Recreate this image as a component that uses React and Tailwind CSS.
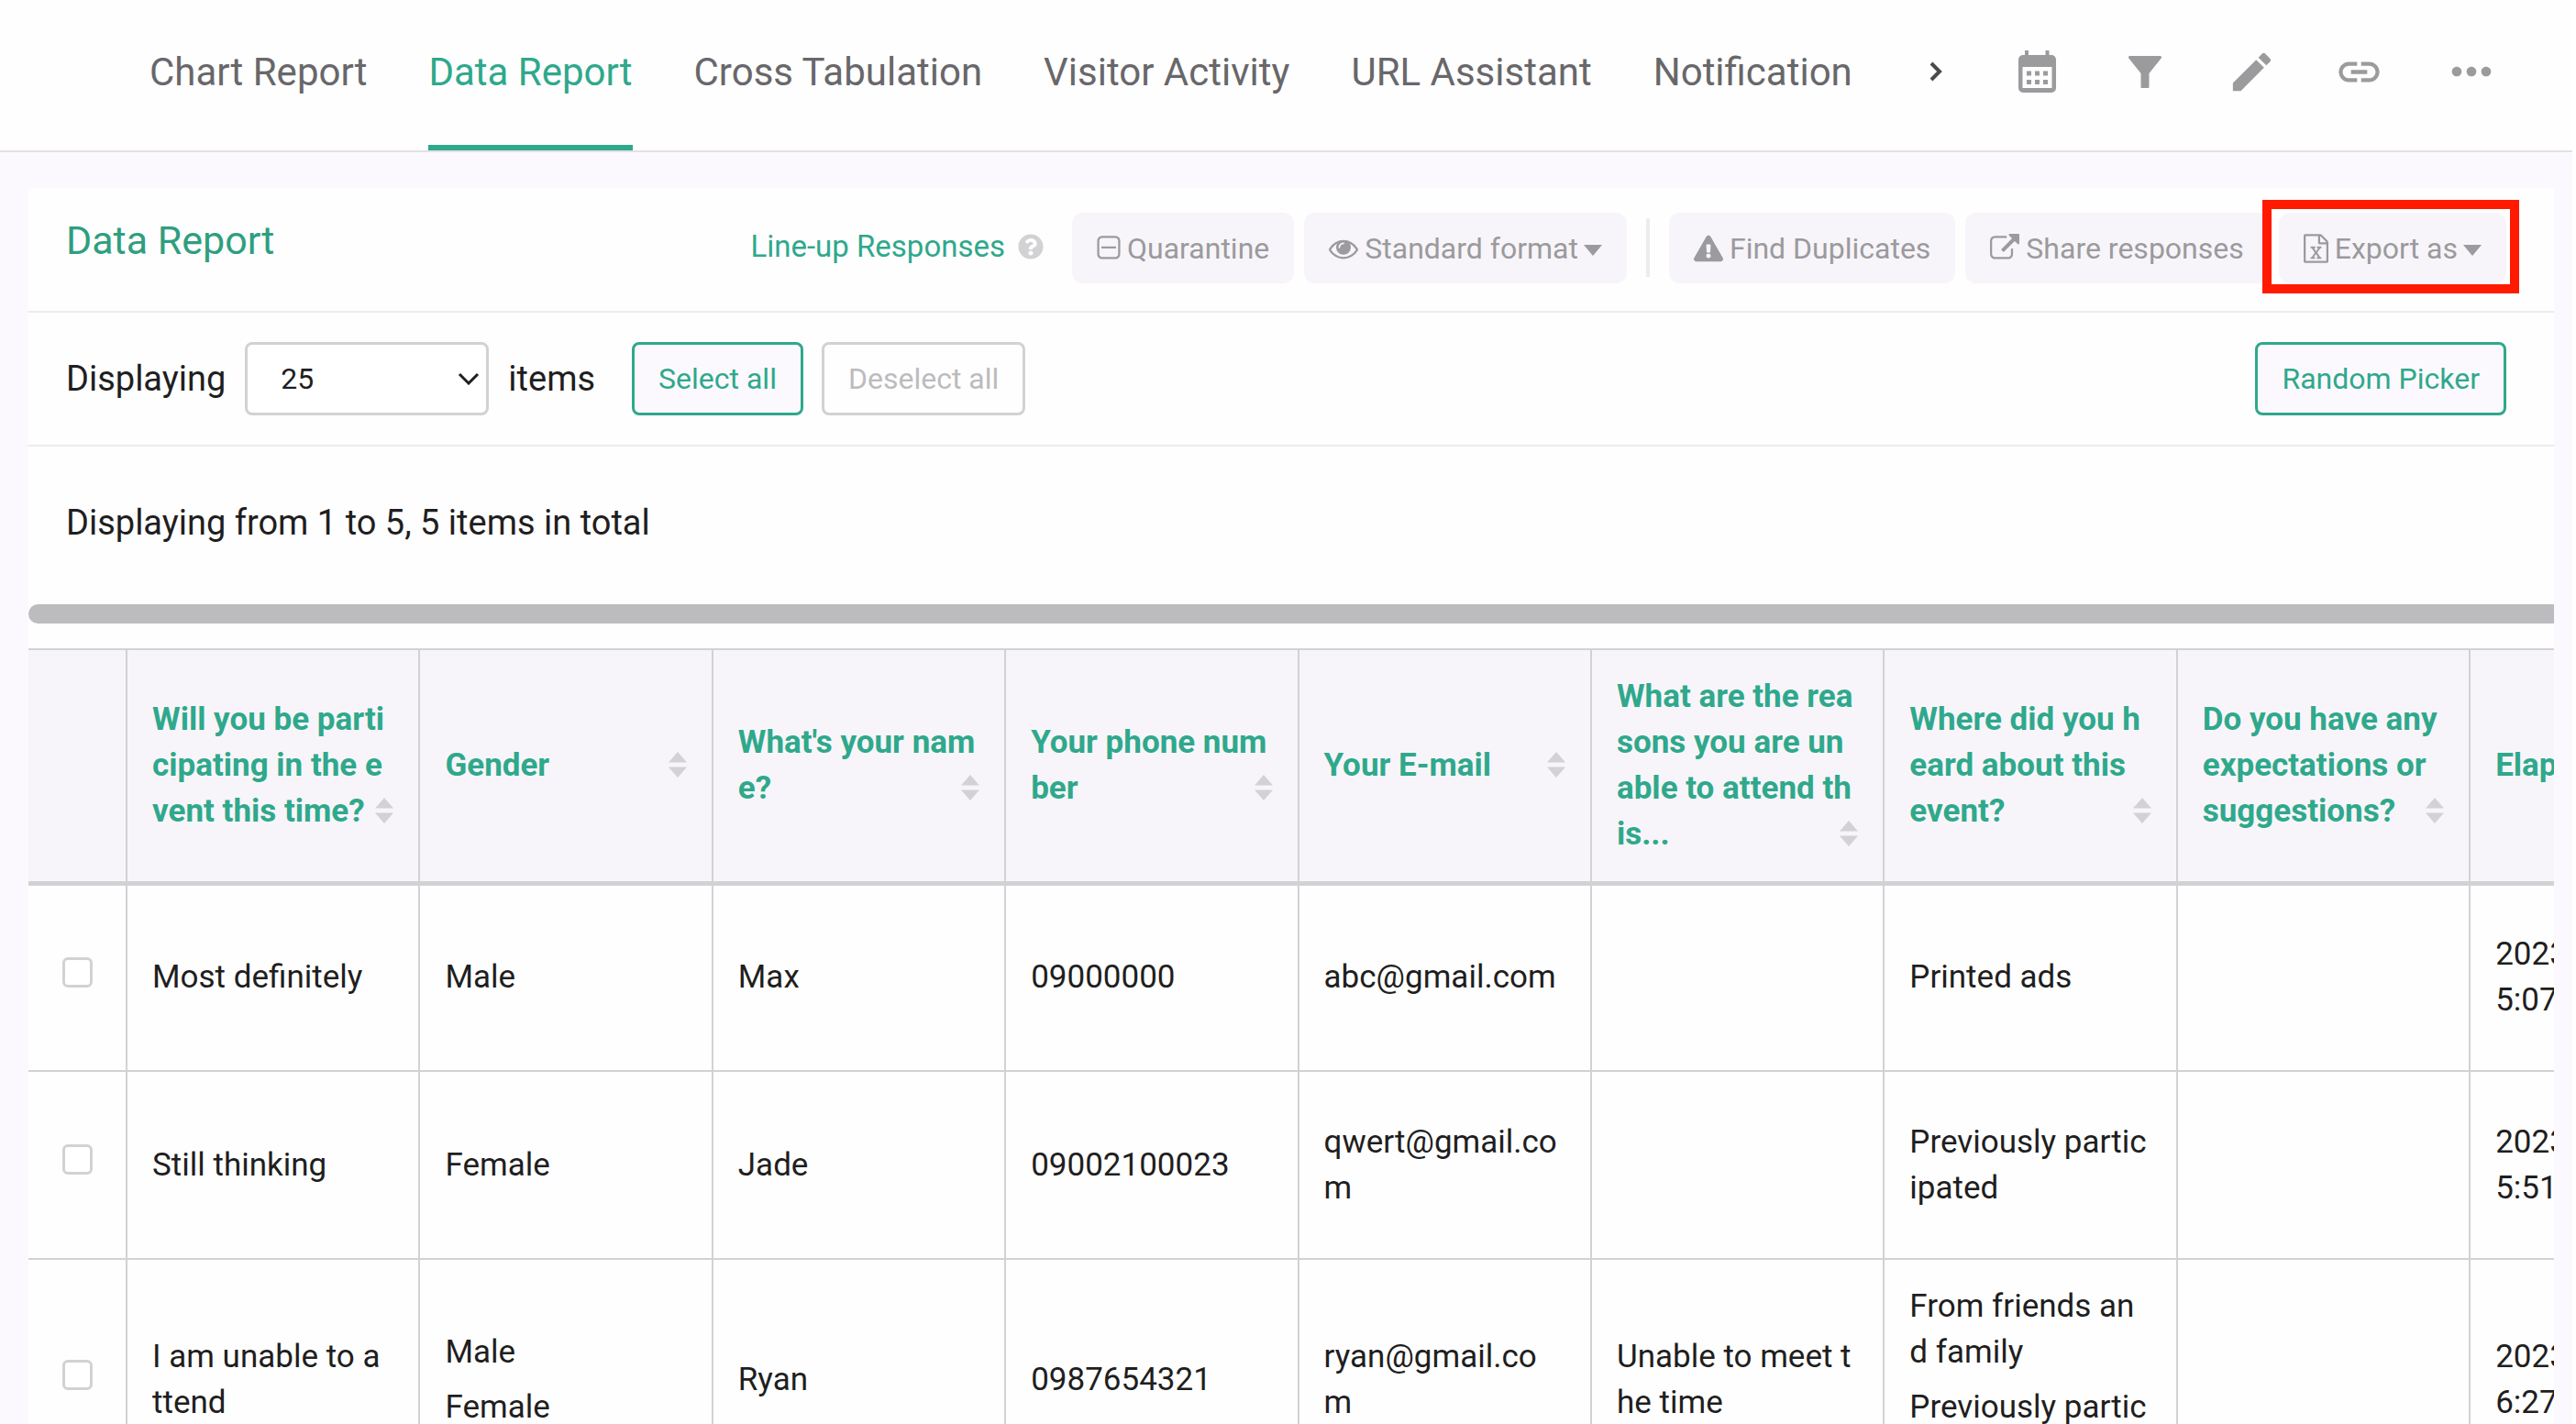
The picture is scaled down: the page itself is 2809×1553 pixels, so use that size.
import { FaExclamationTriangle, FaQuestionCircle } from "react-icons/fa";
import { MdEdit, MdLink, MdMoreHoriz } from "react-icons/md";

const tabs = ["Chart Report", "Data Report", "Cross Tabulation", "Visitor Activity", "URL Assistant", "Notification"];

const columns = [
  "Will you be participating in the event this time?",
  "Gender",
  "What's your name?",
  "Your phone number",
  "Your E-mail",
  "What are the reasons you are unable to attend this...",
  "Where did you heard about this event?",
  "Do you have any expectations or suggestions?",
  "Elapsed time",
];

// every answer is a list, one entry per choice
const rows = [
  [["Most definitely"], ["Male"], ["Max"], ["09000000"], ["abc@gmail.com"], [], ["Printed ads"], [], ["2023-05-04 PM 5:07:21"]],
  [["Still thinking"], ["Female"], ["Jade"], ["09002100023"], ["qwert@gmail.com"], [], ["Previously participated"], [], ["2023-05-04 PM 5:51:40"]],
  [["I am unable to attend"], ["Male", "Female"], ["Ryan"], ["0987654321"], ["ryan@gmail.com"], ["Unable to meet the time"], ["From friends and family", "Previously participated"], [], ["2023-05-04 PM 6:27:13"]],
];

/* Icons */

const ChevronRight = () => (
  <svg viewBox="0 0 14 22" className="w-3.5 h-[22px] fill-none stroke-[#4a494c] stroke-[4]">
    <path d="M2 2l9 9-9 9" />
  </svg>
);

const CalendarIcon = () => (
  <svg viewBox="0 0 41 46" className="w-[41px] h-[46px] fill-current">
    <path fillRule="evenodd" d="M7 0h4v5h18.500V0h4v5H36a5 5 0 0 1 5 5v31a5 5 0 0 1-5 5H5a5 5 0 0 1-5-5V10a5 5 0 0 1 5-5h2zM4.500 18v23h32V18z" />
    <path d="M9 22.500h5v5H9zM18 22.500h5v5h-5zM27 22.500h5v5h-5zM9 32h5v5H9zM18 32h5v5h-5zM27 32h5v5h-5z" />
  </svg>
);

const FilterIcon = () => (
  <svg viewBox="0 0 36 35" className="w-9 h-[35px] fill-current">
    <path d="M1.500 0h33a1.500 1.500 0 0 1 1.200 2.400L22.500 19v15a1 1 0 0 1-1 1h-7a1 1 0 0 1-1-1V19L.3 2.400A1.500 1.500 0 0 1 1.500 0z" />
  </svg>
);

const MinusSquareIcon = () => (
  <svg viewBox="192 0 1408 1792" className="w-[26px] h-8 fill-current">
    <path d="M1344 800v64q0 14-9 23t-23 9h-832q-14 0-23-9t-9-23v-64q0-14 9-23t23-9h832q14 0 23 9t9 23zm128 448v-832q0-66-47-113t-113-47h-832q-66 0-113 47t-47 113v832q0 66 47 113t113 47h832q66 0 113-47t47-113zm128-832v832q0 119-84.5 203.5t-203.5 84.5h-832q-119 0-203.5-84.5t-84.5-203.5v-832q0-119 84.5-203.5t203.5-84.5h832q119 0 203.5 84.5t84.5 203.5z" />
  </svg>
);

const EyeIcon = () => (
  <svg viewBox="0 0 1792 1792" className="size-8 fill-current">
    <path d="M1664 960q-152-236-381-353 61 104 61 225 0 185-131.5 316.5t-316.5 131.5-316.5-131.5-131.5-316.5q0-121 61-225-229 117-381 353 133 205 333.5 326.5t434.5 121.5 434.5-121.5 333.5-326.5zm-720-384q0-20-14-34t-34-14q-125 0-214.5 89.5t-89.5 214.5q0 20 14 34t34 14 34-14 14-34q0-86 61-147t147-61q20 0 34-14t14-34zm848 384q0 34-20 69-140 230-376.5 368.5t-499.5 138.5-499.5-139-376.5-368q-20-35-20-69t20-69q140-229 376.5-368t499.5-139 499.5 139 376.5 368q20 35 20 69z" />
  </svg>
);

const ExternalLinkIcon = () => (
  <svg viewBox="0 0 1792 1792" className="size-8 fill-current">
    <path d="M1408 928v320q0 119-84.5 203.5t-203.5 84.5h-832q-119 0-203.5-84.5t-84.5-203.5v-832q0-119 84.5-203.5t203.5-84.5h704q14 0 23 9t9 23v64q0 14-9 23t-23 9h-704q-66 0-113 47t-47 113v832q0 66 47 113t113 47h832q66 0 113-47t47-113v-320q0-14 9-23t23-9h64q14 0 23 9t9 23zm384-864v512q0 26-19 45t-45 19-45-19l-176-176-652 652q-10 10-23 10t-23-10l-114-114q-10-10-10-23t10-23l652-652-176-176q-19-19-19-45t19-45 45-19h512q26 0 45 19t19 45z" />
  </svg>
);

const ExcelIcon = () => (
  <svg viewBox="128 0 1536 1792" className="w-[27px] h-8 fill-current">
    <path d="M1596 380q28 28 48 76t20 88v1152q0 40-28 68t-68 28h-1344q-40 0-68-28t-28-68v-1600q0-40 28-68t68-28h896q40 0 88 20t76 48zm-444-244v376h376q-10-29-22-41l-313-313q-12-12-41-22zm384 1528v-1024h-416q-40 0-68-28t-28-68v-416h-768v1536h1280zm-979-234v106h281v-106h-75l103-161q5-7 10-16.5t7.5-13.5 3.5-4h2q1 4 5 10 2 4 4.5 7.5t6 8 6.5 8.5l107 161h-76v106h291v-106h-68l-192-273 195-282h67v-107h-279v107h74l-103 159q-4 7-10 16.5t-9 13.5l-2 3h-2q-1-4-5-10-6-11-17-23l-106-159h76v-107h-290v107h68l189 272-194 283h-68z" />
  </svg>
);

const CaretDown = () => (
  <svg viewBox="0 0 20 12" className="w-5 h-3 mt-1 fill-current">
    <path d="M0 0h20L10 12z" />
  </svg>
);

const SortIcon = () => (
  <svg viewBox="0 0 20 28" className="w-5 h-7 mb-3 self-end justify-self-end col-start-1 row-start-1 fill-[#d2d1d4]">
    <path d="M10 0l10 11.500H0zM10 28L0 16.500h20z" />
  </svg>
);

/* Page parts */

const ToolButton = ({ icon, children, caret }) => (
  <button className="flex items-center gap-[7px] h-[77px] px-[27px] rounded-xl bg-[#f7f5f9] text-[32px] text-[#9b9a9d] whitespace-nowrap">
    {icon}
    <span className="flex items-center gap-[6px]">
      {children}
      {caret && <CaretDown />}
    </span>
  </button>
);

const Header = () => (
  <header className="flex items-center justify-between border-b-2 border-[#e2e1e4] bg-[#fefefe] pl-[163px] pr-[46px]">
    <nav className="flex gap-[67px]">
      {tabs.map((tab) => (
        <a
          key={tab}
          href="#"
          className={
            tab === "Data Report"
              ? "h-[164px] leading-[158px] border-b-6 border-[#2fa88c] text-[42px] text-[#2fa88c] whitespace-nowrap"
              : "h-[164px] leading-[158px] text-[42px] text-[#68676a] whitespace-nowrap"
          }
        >
          {tab}
        </a>
      ))}
    </nav>
    <div className="flex items-center h-[156px] mb-2 text-[#9b9a9d]">
      <button aria-label="More tabs" className="flex justify-center w-[104px]">
        <ChevronRight />
      </button>
      <button aria-label="Date" className="flex justify-center w-[117px]">
        <CalendarIcon />
      </button>
      <button aria-label="Filter" className="flex justify-center w-[117px]">
        <FilterIcon />
      </button>
      <button aria-label="Edit" className="flex justify-center w-[117px]">
        <MdEdit className="size-[55px]" />
      </button>
      <button aria-label="Link" className="flex justify-center w-[117px]">
        <MdLink className="size-[53px]" />
      </button>
      <button aria-label="More" className="flex justify-center w-32">
        <MdMoreHoriz className="size-16" />
      </button>
    </div>
  </header>
);

const Toolbar = () => (
  <div className="flex items-start justify-between h-[136px] pt-[27px] pl-[41px] pr-[52px] border-b-2 border-[#ececef]">
    <h1 className="text-[43px] leading-[60px] text-[#2f9e80]">Data Report</h1>
    <div className="flex items-start gap-[11px]">
      <a href="#" className="flex items-center gap-3.5 h-[74px] mr-5 text-[33px] text-[#2fa88c] whitespace-nowrap">
        Line-up Responses
        <FaQuestionCircle className="size-7 text-[#d2d1d4]" />
      </a>
      <ToolButton icon={<MinusSquareIcon />}>Quarantine</ToolButton>
      <ToolButton icon={<EyeIcon />} caret>Standard format</ToolButton>
      <div className="w-1 h-16 mx-2.5 mt-1.5 bg-[#ececef]"></div>
      <ToolButton icon={<FaExclamationTriangle />}>Find Duplicates</ToolButton>
      <ToolButton icon={<ExternalLinkIcon />}>Share responses</ToolButton>
      <div className="relative">
        <ToolButton icon={<ExcelIcon />} caret>Export as</ToolButton>
        {/* highlight frame */}
        <div className="absolute -left-[18px] -right-[14px] -top-[14px] -bottom-[11px] border-10 border-[#ff1a00] pointer-events-none"></div>
      </div>
    </div>
  </div>
);

const Controls = () => (
  <div className="flex items-center justify-between h-[146px] pl-[41px] pr-[52px] border-b-2 border-[#ececef] whitespace-nowrap">
    <div className="flex items-center">
      <label htmlFor="page-size" className="text-[38px]">Displaying</label>
      <div className="grid items-center mx-[21px]">
        <select id="page-size" className="col-start-1 row-start-1 appearance-none w-[266px] h-20 pl-9 rounded-lg border-3 border-[#d2d1d4] bg-white text-[32px]">
          <option>25</option>
          <option>50</option>
          <option>100</option>
        </select>
        <svg viewBox="0 0 24 14" className="col-start-1 row-start-1 justify-self-end w-6 h-3.5 mr-2.5 fill-none stroke-[#1f1e21] stroke-[3] pointer-events-none">
          <path d="M2 2l10 10L22 2" />
        </svg>
      </div>
      <span className="text-[38px]">items</span>
      <button className="h-20 ml-10 px-[26px] rounded-lg border-3 border-[#2fa88c] bg-[#fbf9fd] text-[32px] text-[#2fa88c]">Select all</button>
      <button disabled className="h-20 ml-5 px-[26px] rounded-lg border-3 border-[#d2d1d4] text-[32px] text-[#bcbbbe]">Deselect all</button>
    </div>
    <button className="h-20 px-[26px] rounded-lg border-3 border-[#2fa88c] bg-[#fbf9fd] text-[32px] text-[#2fa88c]">Random Picker</button>
  </div>
);

const ReportTable = () => (
  <table className="table-fixed w-[3301px] border-t-2 border-[#d2d1d4] text-[35px] leading-[50px]">
    <thead className="bg-[#f7f5f9] text-[#2fa88c]">
      <tr className="h-[255px] border-b-5 border-[#d2d1d4]">
        <th className="w-[107px]"></th>
        {columns.map((title) => (
          <th key={title} className="px-[27px] text-left border-l-2 border-[#d2d1d4]">
            <div className="grid">
              <span className="col-start-1 row-start-1 pr-1 break-all">{title}</span>
              <SortIcon />
            </div>
          </th>
        ))}
        <th></th>
      </tr>
    </thead>
    <tbody>
      {rows.map((row, i) => (
        <tr key={i} className="h-[205px] border-b-2 border-[#d2d1d4]">
          <td className="pl-[37px] pb-3">
            <input type="checkbox" aria-label={`Select response ${i + 1}`} className="block appearance-none size-[33px] rounded-md border-3 border-[#d2d1d4] bg-white" />
          </td>
          {row.map((answers, j) => (
            <td key={j} className="py-[26px] pl-[27px] pr-[31px] border-l-2 border-[#d2d1d4]">
              <div className="flex flex-col gap-2.5 break-all">
                {answers.map((answer) => (
                  <p key={answer}>{answer}</p>
                ))}
              </div>
            </td>
          ))}
        </tr>
      ))}
    </tbody>
  </table>
);

const App = () => {
  return (
    <div className="h-screen overflow-hidden pr-1 bg-white font-[Roboto,sans-serif] text-[#1f1e21]">
      <div className="min-h-full bg-[#fbf9fd]">
        <Header />
        <main className="mt-[39px] ml-[31px] mr-5 bg-[#fefefe]">
          <Toolbar />
          <Controls />
          <p className="pt-[58px] pb-14 pl-[41px] text-[38px] leading-[50px]">Displaying from 1 to 5, 5 items in total</p>
          <div className="overflow-hidden">
            <div className="h-[21px] mt-2 mb-[27px] rounded-l-full bg-[#bcbbbe]"></div>
            <ReportTable />
          </div>
        </main>
      </div>
    </div>
  );
};

export default App;
